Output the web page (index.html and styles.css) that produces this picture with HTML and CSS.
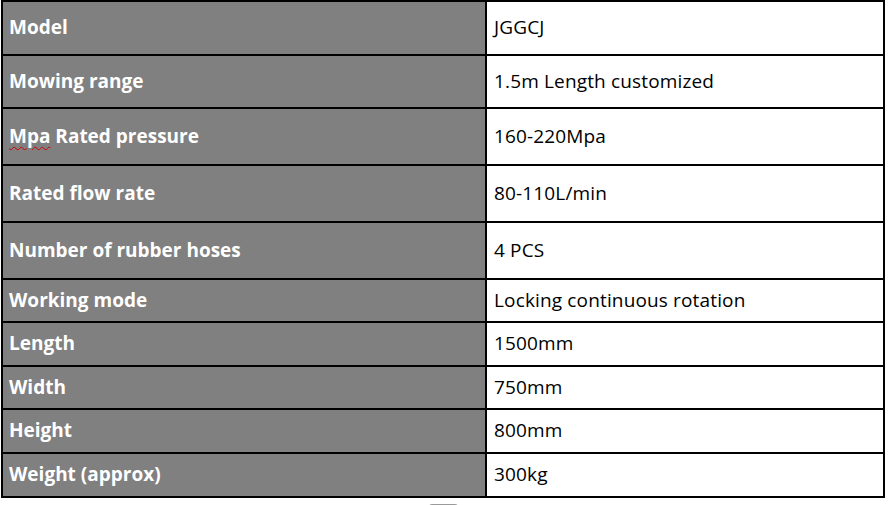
FILE: index.html
```html
<!DOCTYPE html>
<html>
<head>
<meta charset="utf-8">
<link rel="stylesheet" href="styles.css">
</head>
<body>
<table class="spec">
  <tr class="h54"><th>Model</th><td>JGGCJ</td></tr>
  <tr class="h53"><th>Mowing range</th><td>1.5m Length customized</td></tr>
  <tr class="h57"><th><span class="spell">Mpa</span> Rated pressure</th><td>160-220Mpa</td></tr>
  <tr class="h57"><th>Rated flow rate</th><td>80-110L/min</td></tr>
  <tr class="h57"><th>Number of rubber hoses</th><td>4 PCS</td></tr>
  <tr class="h43"><th>Working mode</th><td>Locking continuous rotation</td></tr>
  <tr class="h44"><th>Length</th><td>1500mm</td></tr>
  <tr class="h43"><th>Width</th><td>750mm</td></tr>
  <tr class="h44"><th>Height</th><td>800mm</td></tr>
  <tr class="h44"><th>Weight (approx)</th><td>300kg</td></tr>
</table>
<div class="handle"></div>
</body>
</html>
```
FILE: styles.css
```css
html, body {
  margin: 0;
  padding: 0;
  background: #fff;
}
body {
  padding-left: 1px;
  font-family: "Open Sans", "Noto Sans", sans-serif;
}
.spec {
  border-collapse: collapse;
  width: 884px;
  table-layout: fixed;
}
.spec th, .spec td {
  border: 2px solid #000;
  text-align: left;
  vertical-align: middle;
  font-size: 19px;
  line-height: 24px;
  box-sizing: border-box;
}
.spec th {
  width: 484px;
  padding: 0 0 2px 6px;
  background: #808080;
  color: #fff;
  font-weight: 700;
}
.spec td {
  padding: 0 0 2px 7px;
  color: #000;
  font-weight: 400;
  letter-spacing: 0.15px;
}
.spell {
  text-decoration: underline wavy #d00000;
  text-decoration-thickness: 1px;
  text-underline-offset: 3px;
}
.h54 { height: 54px; }
.h53 { height: 53px; }
.h57 { height: 57px; }
.h43 { height: 43px; }
.h44 { height: 44px; }
.handle {
  margin: 6px 0 0 428px;
  width: 29px;
  height: 4px;
  border-radius: 3px 3px 0 0;
  background: #9a9a9a;
}
```
